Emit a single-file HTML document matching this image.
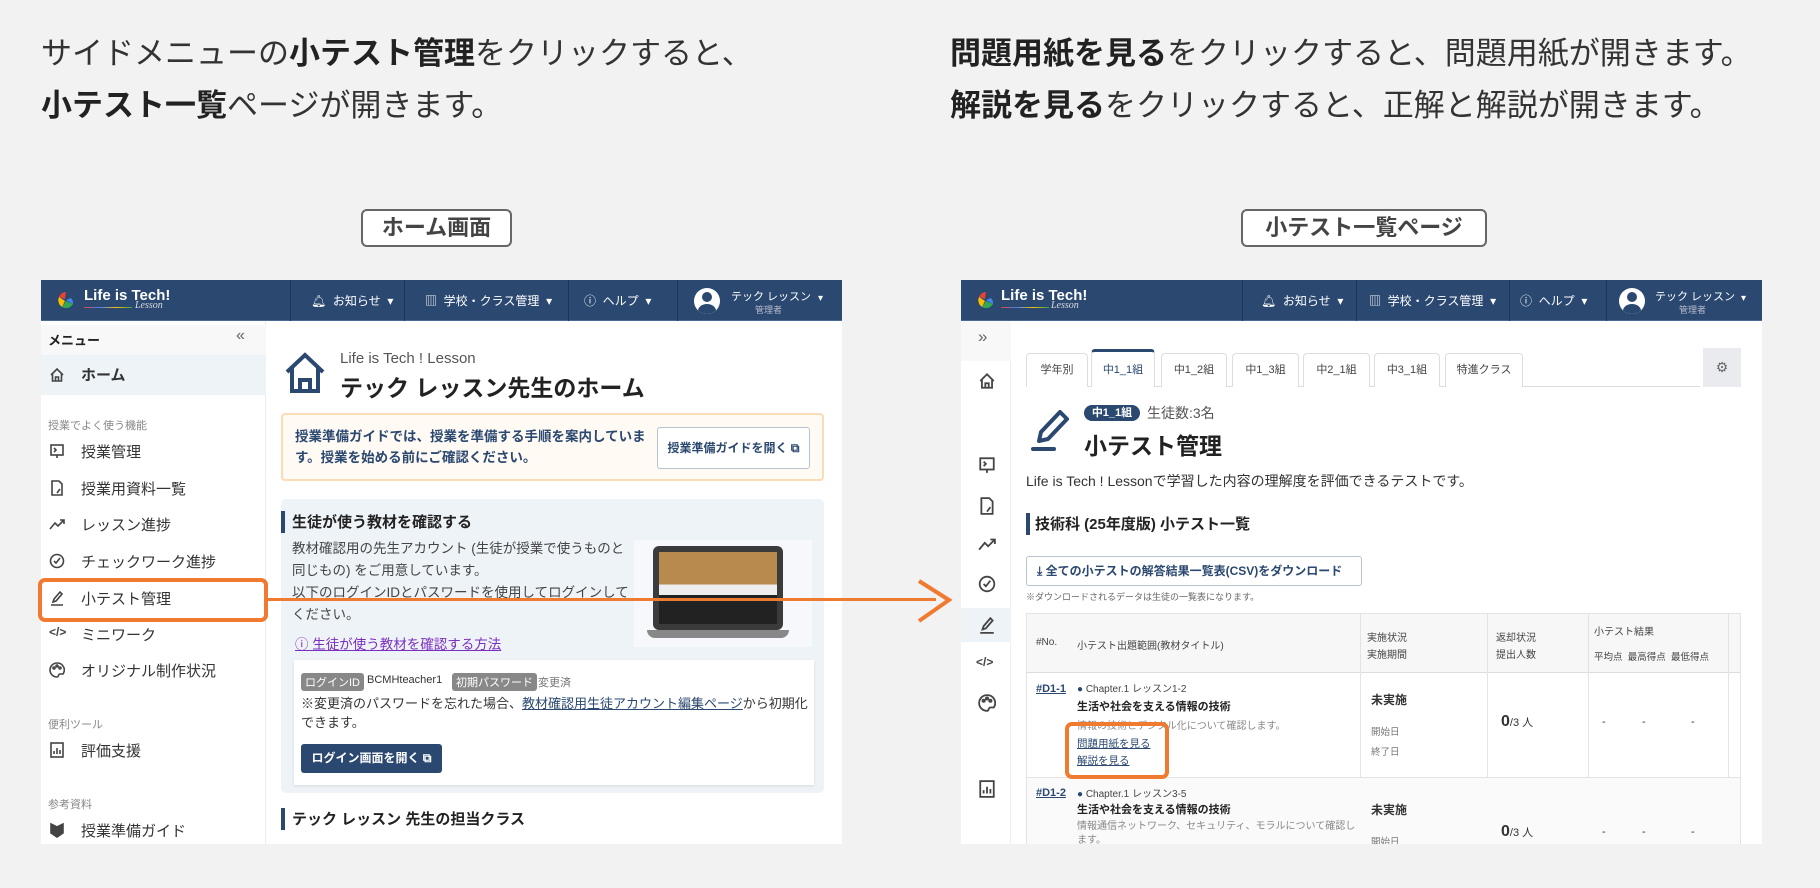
<!DOCTYPE html>
<html><head><meta charset="utf-8">
<style>
*{margin:0;padding:0;box-sizing:border-box}
body{width:1820px;height:888px;background:#f2f2f2;font-family:"Liberation Sans","Noto Sans CJK JP",sans-serif;color:#333;position:relative;overflow:hidden}
.a{position:absolute;white-space:nowrap}
.h{font-size:31px;color:#333;line-height:1}
.h b{color:#222}
.lbl{position:absolute;border:2px solid #666;border-radius:6px;background:#fff;font-size:22px;font-weight:bold;color:#444;text-align:center;line-height:34px}
.frame{position:absolute;top:280px;height:564px;width:801px;background:#fff;overflow:hidden}
.hdr{position:absolute;left:0;top:0;width:100%;height:41px;background:#2a4870;border-bottom:1px solid #4a6a96;color:#fff}
.hdr .d{position:absolute;top:0;height:41px;border-left:1px solid #1d3658}
.hdr .t{position:absolute;top:12px;font-size:12px;color:#fff}
.side{position:absolute;left:0;top:41px;width:225px;bottom:0;background:#fff;border-right:1px solid #eee}
.side .i{position:absolute;left:38px;font-size:15px;color:#333}
.side .s{position:absolute;left:7px;font-size:11px;color:#888}
.ic{position:absolute;width:16px;height:16px;stroke:#444;fill:none;stroke-width:1.6}
.tab{position:absolute;top:73px;height:34px;border:1px solid #ddd;border-bottom:none;border-radius:4px 4px 0 0;background:#fff;font-size:11px;color:#444;text-align:center;line-height:32px}
.sm{font-size:11px}
</style></head><body>

<div class="a h" style="left:41px;top:38px">サイドメニューの<b>小テスト管理</b>をクリックすると、</div>
<div class="a h" style="left:41px;top:90px"><b>小テスト一覧</b>ページが開きます。</div>
<div class="a h" style="left:950px;top:38px"><b>問題用紙を見る</b>をクリックすると、問題用紙が開きます。</div>
<div class="a h" style="left:950px;top:90px"><b>解説を見る</b>をクリックすると、正解と解説が開きます。</div>

<div class="lbl" style="left:361px;top:209px;width:151px;height:38px">ホーム画面</div>
<div class="lbl" style="left:1241px;top:209px;width:246px;height:38px">小テスト一覧ページ</div>

<!-- LEFT FRAME -->
<div class="frame" style="left:41px">
 <div class="hdr">
  <svg class="a" style="left:15px;top:10px" width="20" height="20" viewBox="0 0 20 20"><path d="M10 2 A8 8 0 0 0 3 7 L9 9Z" fill="#e94235"/><path d="M3 7 A8 8 0 0 0 6 17 L9 11Z" fill="#fbbc04"/><path d="M6 17 A8 8 0 0 0 17 14 L10 11Z" fill="#34a853"/><path d="M17 14 A8 8 0 0 0 15 8 L10 10Z" fill="#4285f4"/></svg>
  <div class="a" style="left:43px;top:7px;font-size:15px;font-weight:bold;color:#fff">Life is Tech!</div>
  <div class="a" style="left:43px;top:27px;width:48px;height:1px;background:linear-gradient(90deg,#e94235,#4285f4,#fbbc04,#34a853)"></div>
  <div class="a" style="left:94px;top:20px;font-size:10px;font-style:italic;color:#ddd;font-family:'Liberation Serif',serif">Lesson</div>
  <div class="d" style="left:249px"></div><div class="d" style="left:363px"></div><div class="d" style="left:527px"></div><div class="d" style="left:636px"></div>
  <div class="t" style="left:270px">🔔︎&nbsp; お知らせ&nbsp; ▾</div>
  <div class="t" style="left:384px">▥&nbsp; 学校・クラス管理&nbsp; ▾</div>
  <div class="t" style="left:543px">ⓘ&nbsp; ヘルプ&nbsp; ▾</div>
  <div class="a" style="left:653px;top:8px;width:26px;height:26px;border-radius:50%;background:#fff;overflow:hidden"><div class="a" style="left:8px;top:4px;width:10px;height:10px;border-radius:50%;background:#2a4870"></div><div class="a" style="left:4px;top:16px;width:18px;height:14px;border-radius:50%;background:#2a4870"></div></div>
  <div class="a" style="left:690px;top:8px;font-size:11px">テック レッスン</div>
  <div class="a" style="left:714px;top:23px;font-size:9px;color:#bbc">管理者</div>
  <div class="a" style="left:777px;top:13px;font-size:10px">▾</div>
 </div>
 <div class="side">
  <div class="a" style="left:0;top:4px;width:225px;height:30px;background:#f8f8f8"></div>
  <div class="a" style="left:7px;top:9px;font-size:13px;font-weight:bold;color:#222">メニュー</div>
  <div class="a" style="left:195px;top:6px;font-size:16px;color:#666">«</div>
  <div class="a" style="left:0;top:34px;width:225px;height:40px;background:#eef3f8"></div>
  <svg class="ic" style="left:8px;top:46px" viewBox="0 0 16 16"><path d="M2 8 L8 2 L14 8 M3.5 7 V14 H12.5 V7 M6.5 14 V10 H9.5 V14"/></svg>
  <div class="i" style="left:40px;top:43px;font-weight:bold">ホーム</div>
  <div class="s" style="top:96px">授業でよく使う機能</div>
  <svg class="ic" style="left:8px;top:122px" viewBox="0 0 16 16"><rect x="2" y="2" width="12" height="10"/><path d="M8 12 V15 M5 5 L7 7 L5 9"/></svg>
  <div class="i" style="left:40px;top:120px">授業管理</div>
  <svg class="ic" style="left:8px;top:159px" viewBox="0 0 16 16"><path d="M3 1 H10 L13 4 V15 H3Z M8 13 L11 9"/></svg>
  <div class="i" style="left:40px;top:157px">授業用資料一覧</div>
  <svg class="ic" style="left:8px;top:195px" viewBox="0 0 16 16"><path d="M1 13 L6 7 L9 10 L15 4 M11 4 H15 V8"/></svg>
  <div class="i" style="left:40px;top:193px">レッスン進捗</div>
  <svg class="ic" style="left:8px;top:232px" viewBox="0 0 16 16"><circle cx="8" cy="8" r="6.5"/><path d="M5 8 L7 10 L11 5"/></svg>
  <div class="i" style="left:40px;top:230px">チェックワーク進捗</div>
  <svg class="ic" style="left:8px;top:269px" viewBox="0 0 16 16"><path d="M4 12 L5 9 L11 2 L13 4 L7 11Z M2 15 H14"/></svg>
  <div class="i" style="left:40px;top:267px">小テスト管理</div>
  <div class="a" style="left:8px;top:304px;font-size:12px;font-weight:bold;color:#444">&lt;/&gt;</div>
  <div class="i" style="left:40px;top:303px">ミニワーク</div>
  <svg class="ic" style="left:8px;top:341px" viewBox="0 0 16 16"><path d="M8 1 A7 7 0 1 0 8 15 C10 15 9 12 11 12 H14 A7 7 0 0 0 8 1Z"/><circle cx="5" cy="6" r="1"/><circle cx="8" cy="4" r="1"/><circle cx="11" cy="6" r="1"/></svg>
  <div class="i" style="left:40px;top:339px">オリジナル制作状況</div>
  <div class="s" style="top:395px">便利ツール</div>
  <svg class="ic" style="left:8px;top:421px" viewBox="0 0 16 16"><rect x="2" y="1" width="12" height="14"/><path d="M5 12 V9 M8 12 V6 M11 12 V8"/></svg>
  <div class="i" style="left:40px;top:419px">評価支援</div>
  <div class="s" style="top:475px">参考資料</div>
  <svg class="ic" style="left:8px;top:501px" viewBox="0 0 16 16"><path d="M2 2 L8 5 L14 2 V11 L8 15 L2 11Z" fill="#444"/></svg>
  <div class="i" style="left:40px;top:499px">授業準備ガイド</div>
 </div>
 <!-- main -->
 <svg class="a" style="left:243px;top:72px" width="42" height="42" viewBox="0 0 42 42" fill="none" stroke="#2a4870" stroke-width="4"><path d="M3 20 L21 3 L39 20 M8 16 V39 H34 V16 M16 39 V28 H26 V39"/></svg>
 <div class="a" style="left:299px;top:70px;font-size:15px;color:#555">Life is Tech ! Lesson</div>
 <div class="a" style="left:299px;top:89px;font-size:23px;font-weight:bold;color:#222">テック レッスン先生のホーム</div>
 <div class="a" style="left:240px;top:133px;width:543px;height:68px;background:#fffaf3;border:2px solid #fbdcb5;border-radius:4px"></div>
 <div class="a" style="left:254px;top:146px;font-size:13.5px;font-weight:bold;color:#2a4870;line-height:21px">授業準備ガイドでは、授業を準備する手順を案内していま<br>す。授業を始める前にご確認ください。</div>
 <div class="a" style="left:616px;top:147px;width:153px;height:42px;background:#fff;border:1px solid #b9c3d0;border-radius:3px;font-size:12px;font-weight:bold;color:#2a4870;text-align:center;line-height:40px">授業準備ガイドを開く ⧉</div>
 <div class="a" style="left:240px;top:219px;width:543px;height:294px;background:#eef3f8;border-radius:5px"></div>
 <div class="a" style="left:240px;top:231px;width:4px;height:22px;background:#2a4870"></div>
 <div class="a" style="left:251px;top:231px;font-size:15px;font-weight:bold;color:#222">生徒が使う教材を確認する</div>
 <div class="a" style="left:251px;top:258px;font-size:13.5px;color:#444;line-height:22px;white-space:normal;width:345px">教材確認用の先生アカウント (生徒が授業で使うものと同じもの) をご用意しています。<br>以下のログインIDとパスワードを使用してログインしてください。</div>
 <div class="a" style="left:593px;top:260px;width:178px;height:107px;background:#f6f8fb"></div>
 <div class="a" style="left:612px;top:266px;width:130px;height:84px;background:#3b3b3b;border-radius:6px"></div>
 <div class="a" style="left:618px;top:272px;width:118px;height:72px;background:linear-gradient(#b88a4e 0 45%,#eee 45% 60%,#222 60%)"></div>
 <div class="a" style="left:606px;top:350px;width:142px;height:8px;background:#888;border-radius:0 0 8px 8px"></div>
 <div class="a" style="left:254px;top:353px;font-size:13.5px;color:#7b2fbf;text-decoration:underline">ⓘ 生徒が使う教材を確認する方法</div>
 <div class="a" style="left:253px;top:380px;width:520px;height:125px;background:#fff;box-shadow:0 1px 3px rgba(0,0,0,.1)"></div>
 <div class="a sm" style="left:260px;top:393px;background:#888;color:#fff;padding:1px 4px;border-radius:3px">ログインID</div>
 <div class="a sm" style="left:326px;top:394px">BCMHteacher1</div>
 <div class="a sm" style="left:411px;top:393px;background:#888;color:#fff;padding:1px 4px;border-radius:3px">初期パスワード</div>
 <div class="a sm" style="left:497px;top:394px;color:#777">変更済</div>
 <div class="a" style="left:260px;top:414px;font-size:13px;line-height:19px">※変更済のパスワードを忘れた場合、<span style="color:#2a4870;text-decoration:underline">教材確認用生徒アカウント編集ページ</span>から初期化<br>できます。</div>
 <div class="a" style="left:260px;top:464px;width:141px;height:29px;background:#2a4870;border-radius:3px;color:#fff;font-size:12px;font-weight:bold;text-align:center;line-height:29px">ログイン画面を開く ⧉</div>
 <div class="a" style="left:240px;top:528px;width:4px;height:22px;background:#2a4870"></div>
 <div class="a" style="left:251px;top:528px;font-size:15px;font-weight:bold;color:#222">テック レッスン 先生の担当クラス</div>
</div>

<!-- orange highlight + arrow -->
<div class="a" style="left:38px;top:578px;width:230px;height:44px;border:4px solid #f07a30;border-radius:7px"></div>
<div class="a" style="left:268px;top:598px;width:668px;height:3px;background:#f07a30"></div>
<svg class="a" style="left:915px;top:578px" width="40" height="46" viewBox="0 0 40 46"><path d="M4 3 L34 22 L4 43" fill="none" stroke="#f07a30" stroke-width="4"/></svg>

<!-- RIGHT FRAME -->
<div class="frame" style="left:961px">
 <div class="hdr">
  <svg class="a" style="left:15px;top:10px" width="20" height="20" viewBox="0 0 20 20"><path d="M10 2 A8 8 0 0 0 3 7 L9 9Z" fill="#e94235"/><path d="M3 7 A8 8 0 0 0 6 17 L9 11Z" fill="#fbbc04"/><path d="M6 17 A8 8 0 0 0 17 14 L10 11Z" fill="#34a853"/><path d="M17 14 A8 8 0 0 0 15 8 L10 10Z" fill="#4285f4"/></svg>
  <div class="a" style="left:40px;top:7px;font-size:15px;font-weight:bold;color:#fff">Life is Tech!</div>
  <div class="a" style="left:40px;top:27px;width:48px;height:1px;background:linear-gradient(90deg,#e94235,#4285f4,#fbbc04,#34a853)"></div>
  <div class="a" style="left:90px;top:20px;font-size:10px;font-style:italic;color:#ddd;font-family:'Liberation Serif',serif">Lesson</div>
  <div class="d" style="left:281px"></div><div class="d" style="left:395px"></div><div class="d" style="left:548px"></div><div class="d" style="left:645px"></div>
  <div class="t" style="left:300px">🔔︎&nbsp; お知らせ&nbsp; ▾</div>
  <div class="t" style="left:408px">▥&nbsp; 学校・クラス管理&nbsp; ▾</div>
  <div class="t" style="left:559px">ⓘ&nbsp; ヘルプ&nbsp; ▾</div>
  <div class="a" style="left:658px;top:8px;width:26px;height:26px;border-radius:50%;background:#fff;overflow:hidden"><div class="a" style="left:8px;top:4px;width:10px;height:10px;border-radius:50%;background:#2a4870"></div><div class="a" style="left:4px;top:16px;width:18px;height:14px;border-radius:50%;background:#2a4870"></div></div>
  <div class="a" style="left:694px;top:8px;font-size:11px">テック レッスン</div>
  <div class="a" style="left:718px;top:23px;font-size:9px;color:#bbc">管理者</div>
  <div class="a" style="left:780px;top:13px;font-size:10px">▾</div>
 </div>
 <div class="a" style="left:0;top:41px;width:50px;height:523px;background:#fff;border-right:1px solid #eee"></div>
 <div class="a" style="left:0;top:41px;width:50px;height:40px;background:#f8f8f8"></div>
 <div class="a" style="left:17px;top:47px;font-size:17px;color:#666">»</div>
 <div class="a" style="left:0;top:328px;width:50px;height:34px;background:#eef3f8"></div>
 <svg class="ic" style="left:17px;top:92px;width:18px;height:18px" viewBox="0 0 16 16"><path d="M2 8 L8 2 L14 8 M3.5 7 V14 H12.5 V7 M6.5 14 V10 H9.5 V14"/></svg>
 <svg class="ic" style="left:17px;top:176px;width:18px;height:18px" viewBox="0 0 16 16"><rect x="2" y="2" width="12" height="10"/><path d="M8 12 V15 M5 5 L7 7 L5 9"/></svg>
 <svg class="ic" style="left:17px;top:217px;width:18px;height:18px" viewBox="0 0 16 16"><path d="M3 1 H10 L13 4 V15 H3Z M8 13 L11 9"/></svg>
 <svg class="ic" style="left:17px;top:255px;width:18px;height:18px" viewBox="0 0 16 16"><path d="M1 13 L6 7 L9 10 L15 4 M11 4 H15 V8"/></svg>
 <svg class="ic" style="left:17px;top:295px;width:18px;height:18px" viewBox="0 0 16 16"><circle cx="8" cy="8" r="6.5"/><path d="M5 8 L7 10 L11 5"/></svg>
 <svg class="ic" style="left:17px;top:336px;width:18px;height:18px" viewBox="0 0 16 16"><path d="M4 12 L5 9 L11 2 L13 4 L7 11Z M2 15 H14"/></svg>
 <div class="a" style="left:15px;top:375px;font-size:12px;font-weight:bold;color:#444">&lt;/&gt;</div>
 <svg class="ic" style="left:17px;top:414px;width:18px;height:18px" viewBox="0 0 16 16"><path d="M8 1 A7 7 0 1 0 8 15 C10 15 9 12 11 12 H14 A7 7 0 0 0 8 1Z"/><circle cx="5" cy="6" r="1"/><circle cx="8" cy="4" r="1"/><circle cx="11" cy="6" r="1"/></svg>
 <svg class="ic" style="left:17px;top:500px;width:18px;height:18px" viewBox="0 0 16 16"><rect x="2" y="1" width="12" height="14"/><path d="M5 12 V9 M8 12 V6 M11 12 V8"/></svg>

 <div class="a" style="left:65px;top:106px;width:674px;height:1px;background:#ddd"></div>
 <div class="tab" style="left:65px;width:62px">学年別</div>
 <div class="tab" style="left:130px;top:69px;height:38px;width:64px;border-top:3px solid #2a4870;color:#2a4870;line-height:36px">中1_1組</div>
 <div class="tab" style="left:200px;width:66px">中1_2組</div>
 <div class="tab" style="left:271px;width:67px">中1_3組</div>
 <div class="tab" style="left:342px;width:67px">中2_1組</div>
 <div class="tab" style="left:413px;width:66px">中3_1組</div>
 <div class="tab" style="left:484px;width:78px">特進クラス</div>
 <div class="a" style="left:742px;top:68px;width:38px;height:39px;background:#e9ebee;text-align:center;line-height:39px;font-size:14px;color:#666">⚙</div>

 <svg class="a" style="left:69px;top:128px" width="46" height="44" viewBox="0 0 46 44" fill="none" stroke="#2a4870" stroke-width="4"><path d="M9 33 L11 24 L30 4 L37 11 L18 31Z" stroke-linejoin="round"/><path d="M3 41 H24" stroke-linecap="round"/></svg>
 <div class="a" style="left:123px;top:125px;width:56px;height:16px;background:#2a4870;border-radius:8px;color:#fff;font-size:11px;font-weight:bold;text-align:center;line-height:16px">中1_1組</div>
 <div class="a" style="left:186px;top:123px;font-size:14px;color:#555">生徒数:3名</div>
 <div class="a" style="left:123px;top:147px;font-size:23px;font-weight:bold;color:#222">小テスト管理</div>
 <div class="a" style="left:65px;top:191px;font-size:14px;color:#333">Life is Tech ! Lessonで学習した内容の理解度を評価できるテストです。</div>
 <div class="a" style="left:65px;top:233px;width:4px;height:22px;background:#2a4870"></div>
 <div class="a" style="left:74px;top:233px;font-size:15px;font-weight:bold;color:#222">技術科 (25年度版) 小テスト一覧</div>
 <div class="a" style="left:65px;top:276px;width:336px;height:30px;border:1px solid #b9c3d0;border-radius:3px;background:#fff;font-size:12px;font-weight:bold;color:#2a4870;line-height:28px;padding-left:10px">⤓ 全ての小テストの解答結果一覧表(CSV)をダウンロード</div>
 <div class="a" style="left:65px;top:310px;font-size:9px;color:#666">※ダウンロードされるデータは生徒の一覧表になります。</div>

 <div class="a" style="left:65px;top:333px;width:715px;height:240px;border:1px solid #e3e3e3;background:#fff"></div>
 <div class="a" style="left:66px;top:334px;width:713px;height:59px;background:#f7f7f7;border-bottom:1px solid #ddd"></div>
 <div class="a" style="left:399px;top:334px;width:1px;height:240px;background:#e3e3e3"></div>
 <div class="a" style="left:526px;top:334px;width:1px;height:240px;background:#e3e3e3"></div>
 <div class="a" style="left:627px;top:334px;width:1px;height:240px;background:#e3e3e3"></div>
 <div class="a" style="left:767px;top:334px;width:1px;height:240px;background:#e3e3e3"></div>
 <div class="a" style="left:66px;top:497px;width:713px;height:1px;background:#e3e3e3"></div>
 <div class="a" style="left:66px;top:498px;width:713px;height:70px;background:#fafafa"></div>
 <div class="a" style="left:75px;top:357px;font-size:10px;color:#444">#No.</div>
 <div class="a" style="left:116px;top:357px;font-size:10px;color:#444">小テスト出題範囲(教材タイトル)</div>
 <div class="a" style="left:406px;top:350px;font-size:10px;color:#444;line-height:17px">実施状況<br>実施期間</div>
 <div class="a" style="left:535px;top:350px;font-size:10px;color:#444;line-height:17px">返却状況<br>提出人数</div>
 <div class="a" style="left:633px;top:343px;font-size:10px;color:#444">小テスト結果</div>
 <div class="a" style="left:633px;top:369px;font-size:9.5px;color:#444">平均点 &nbsp;最高得点 &nbsp;最低得点</div>

 <div class="a" style="left:75px;top:403px;font-size:11px;font-weight:bold;color:#2a4870;text-decoration:underline">#D1-1</div>
 <div class="a" style="left:116px;top:400px;font-size:10px;color:#444"><span style="color:#2a4870">●</span> Chapter.1 レッスン1-2</div>
 <div class="a" style="left:116px;top:418px;font-size:11px;font-weight:bold;color:#222">生活や社会を支える情報の技術</div>
 <div class="a" style="left:116px;top:437px;font-size:10px;color:#888">情報の技術とデジタル化について確認します。</div>
 <div class="a" style="left:116px;top:456px;font-size:10.5px;color:#2a4870;text-decoration:underline">問題用紙を見る</div>
 <div class="a" style="left:116px;top:473px;font-size:10.5px;color:#2a4870;text-decoration:underline">解説を見る</div>
 <div class="a" style="left:410px;top:411px;font-size:12px;font-weight:bold;color:#333">未実施</div>
 <div class="a" style="left:410px;top:444px;font-size:9.5px;color:#777">開始日</div>
 <div class="a" style="left:410px;top:464px;font-size:9.5px;color:#777">終了日</div>
 <div class="a" style="left:540px;top:433px;font-size:11px;color:#333"><b style="font-size:16px">0</b>/3 人</div>
 <div class="a" style="left:641px;top:436px;font-size:11px">-</div><div class="a" style="left:681px;top:436px;font-size:11px">-</div><div class="a" style="left:730px;top:436px;font-size:11px">-</div>

 <div class="a" style="left:75px;top:507px;font-size:11px;font-weight:bold;color:#2a4870;text-decoration:underline">#D1-2</div>
 <div class="a" style="left:116px;top:505px;font-size:10px;color:#444"><span style="color:#2a4870">●</span> Chapter.1 レッスン3-5</div>
 <div class="a" style="left:116px;top:521px;font-size:11px;font-weight:bold;color:#222">生活や社会を支える情報の技術</div>
 <div class="a" style="left:116px;top:540px;font-size:10px;color:#888;line-height:14px">情報通信ネットワーク、セキュリティ、モラルについて確認し<br>ます。</div>
 <div class="a" style="left:410px;top:521px;font-size:12px;font-weight:bold;color:#333">未実施</div>
 <div class="a" style="left:410px;top:554px;font-size:9.5px;color:#777">開始日</div>
 <div class="a" style="left:540px;top:543px;font-size:11px;color:#333"><b style="font-size:16px">0</b>/3 人</div>
 <div class="a" style="left:641px;top:546px;font-size:11px">-</div><div class="a" style="left:681px;top:546px;font-size:11px">-</div><div class="a" style="left:730px;top:546px;font-size:11px">-</div>
</div>
<div class="a" style="left:1065px;top:722px;width:104px;height:57px;border:4px solid #f07a30;border-radius:7px"></div>
</body></html>
